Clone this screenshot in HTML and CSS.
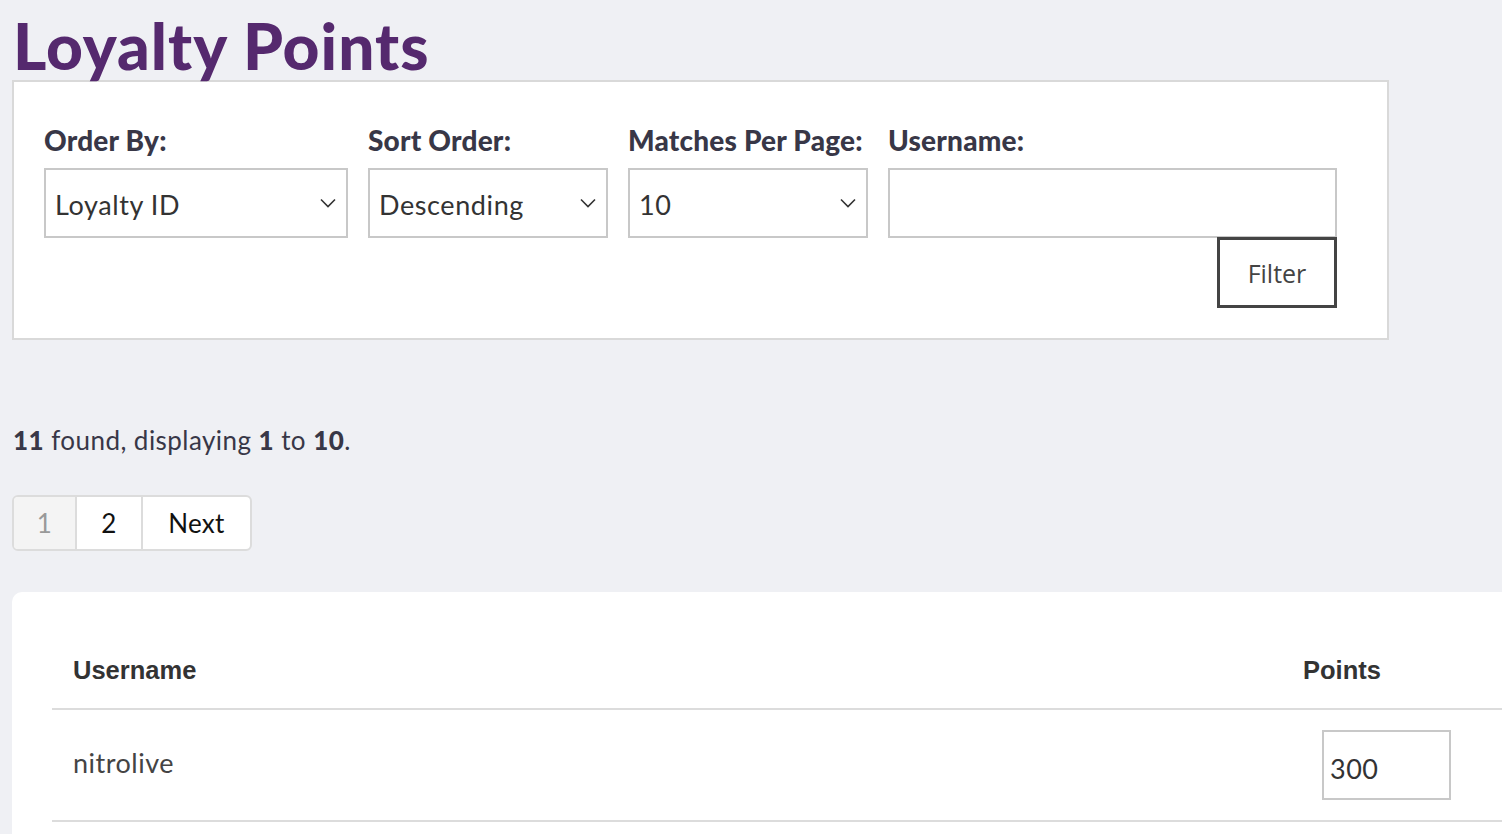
FILE: index.html
```html
<!DOCTYPE html>
<html>
<head>
<meta charset="utf-8">
<link rel="stylesheet" href="styles.css">
</head>
<body>
<h1 class="title">Loyalty Points</h1>
<form class="filter-box">
  <div class="fields">
    <div class="field f-order">
      <label class="label">Order By:</label>
      <div class="select"><span>Loyalty ID</span><svg class="chev" viewBox="0 0 16 10" width="16" height="10"><path d="M1 1.5 L8 8.5 L15 1.5" fill="none" stroke="#333" stroke-width="1.6"/></svg></div>
    </div>
    <div class="field f-sort">
      <label class="label">Sort Order:</label>
      <div class="select"><span>Descending</span><svg class="chev" viewBox="0 0 16 10" width="16" height="10"><path d="M1 1.5 L8 8.5 L15 1.5" fill="none" stroke="#333" stroke-width="1.6"/></svg></div>
    </div>
    <div class="field f-match">
      <label class="label">Matches Per Page:</label>
      <div class="select"><span>10</span><svg class="chev" viewBox="0 0 16 10" width="16" height="10"><path d="M1 1.5 L8 8.5 L15 1.5" fill="none" stroke="#333" stroke-width="1.6"/></svg></div>
    </div>
    <div class="field f-user">
      <label class="label">Username:</label>
      <div class="input"></div>
      <div class="btn-row"><button type="button" class="filter-btn">Filter</button></div>
    </div>
  </div>
</form>
<p class="found"><b>11</b> found, displaying <b>1</b> to <b>10</b>.</p>
<div class="pager">
  <span class="pg current">1</span>
  <span class="pg">2</span>
  <span class="pg next">Next</span>
</div>
<div class="card">
  <div class="trow thead">
    <div class="c1">Username</div>
    <div class="c2">Points</div>
  </div>
  <div class="trow tbody">
    <div class="c1">nitrolive</div>
    <div class="c2"><div class="pts">300</div></div>
  </div>
</div>
</body>
</html>
```
FILE: styles.css
```css
html { overflow: hidden; }
body {
  margin: 0;
  background: #eff0f4;
  font-family: Lato, "Open Sans", sans-serif;
  color: #383747;
  width: 1600px;
}
.title {
  margin: 0;
  padding: 12px 0 0 13px;
  font-size: 64px;
  line-height: 68px;
  font-weight: 900;
  color: #55296e;
  letter-spacing: 1px;
}
.filter-box {
  box-sizing: border-box;
  margin: 0 0 0 12px;
  width: 1377px;
  height: 260px;
  background: #fff;
  border: 2px solid #d9d9d9;
  padding: 38px 0 0 30px;
}
.fields { display: flex; gap: 20px; align-items: flex-start; }
.f-order { width: 304px; }
.f-sort, .f-match { width: 240px; }
.f-user { width: 449px; }
.label {
  display: block;
  font-size: 28px;
  font-weight: 900;
  line-height: 40px;
  margin-bottom: 8px;
  letter-spacing: 0.2px;
  color: #383747;
}
.select, .input {
  box-sizing: border-box;
  height: 70px;
  border: 2px solid #c8c8c8;
  background: #fff;
  display: flex;
  align-items: center;
  justify-content: space-between;
  padding: 3px 10px 0 9px;
  font-size: 27px;
  letter-spacing: 0.6px;
  color: #333;
}
.chev { margin-top: -4px; }
.btn-row { display: flex; justify-content: flex-end; margin-top: -1px; }
.filter-btn {
  box-sizing: border-box;
  width: 120px;
  height: 71px;
  border: 3px solid #444;
  background: #fff;
  font-family: "Open Sans", sans-serif;
  font-size: 25px;
  color: #444;
  padding: 0;
}
.found {
  margin: 82px 0 0 13px;
  font-size: 26px;
  line-height: 36px;
  letter-spacing: 0.45px;
  color: #383747;
}
.found b { font-weight: 900; }
.pager {
  margin: 37px 0 0 12px;
  display: inline-flex;
  border: 2px solid #dcdcdc;
  border-radius: 6px;
  background: #fff;
  overflow: hidden;
  height: 56px;
  box-sizing: border-box;
  vertical-align: top;
}
.pg {
  display: flex;
  align-items: center;
  justify-content: center;
  font-size: 26px;
  letter-spacing: 0.3px;
  color: #111;
  border-left: 2px solid #dcdcdc;
}
.pg.current { border-left: 0; width: 61px; background: #f4f4f4; color: #999; }
.pg:nth-child(2) { width: 64px; }
.pg.next { width: 107px; }
.card {
  margin: 41px 0 0 12px;
  background: #fff;
  border-radius: 10px 0 0 0;
  padding: 40px 40px 0 40px;
  width: 1471px;
  height: 300px;
}
.trow {
  display: grid;
  grid-template-columns: 1fr 240px;
  border-bottom: 2px solid #dcdcdc;
}
.thead { height: 76px; align-items: center; font-family: "Liberation Sans", Arial, sans-serif; font-weight: 700; font-size: 25.5px; color: #333; }
.thead .c1 { padding: 0 0 0 21px; }
.thead .c2 { padding-left: 20px; }
.tbody { height: 110px; align-items: center; font-size: 27px; letter-spacing: 0.5px; color: #444; }
.tbody .c1 { padding-left: 21px; margin-top: -6px; }
.tbody .c2 { padding-left: 39px; }
.pts {
  box-sizing: border-box;
  width: 129px;
  height: 70px;
  border: 2px solid #c8c8c8;
  display: flex;
  align-items: center;
  padding: 6px 0 0 6px;
  font-size: 27px;
  letter-spacing: 0.5px;
  color: #333;
}
```
